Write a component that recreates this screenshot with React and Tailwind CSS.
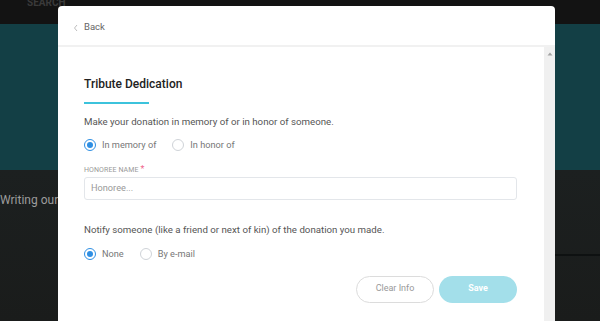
import React from "react";

function Radio({ checked, label, className = "" }) {
  return (
    <div className={"flex items-center " + className}>
      {checked ? (
        <span className="w-[12px] h-[12px] rounded-full border-[1.5px] border-[#2f8fe3] flex items-center justify-center">
          <span className="w-[6px] h-[6px] rounded-full bg-[#2f8fe3]" />
        </span>
      ) : (
        <span className="w-[12px] h-[12px] rounded-full border border-[#cfd3d8]" />
      )}
      <span className="ml-[6px] text-[9.2px] text-[#777] leading-none">{label}</span>
    </div>
  );
}

export default function App() {
  return (
    <div
      className="relative w-[600px] h-[321px] overflow-hidden flex flex-col"
      style={{ fontFamily: "Roboto, 'Liberation Sans', sans-serif" }}
    >
      <div className="h-[24px] bg-[#131313] shrink-0 overflow-hidden">
        <div className="pl-[27px] -mt-[4px] text-[10px] leading-[14px] font-bold text-[#3a3a3a]">SEARCH</div>
      </div>
      <div className="h-[146px] bg-[#133f45] shrink-0" />
      <div className="flex-1 bg-gradient-to-b from-[#1c2020] to-[#1a1c1b] flex flex-col">
        <div className="pt-[24px] text-[12px] text-[#9c9c9c] leading-none">Writing our</div>
        <div className="flex-1" />
      </div>
      <div className="absolute left-[555px] right-0 top-[254px] h-[2px] bg-[#0e1111]" />

      <div className="absolute left-[58px] top-[6px] w-[497px] h-[330px] bg-white rounded-t-[4px] flex flex-col">
        <div className="h-[41px] flex items-center pl-[15px] pt-[4px] border-b-2 border-[#f1f1f1] shrink-0">
          <svg width="6" height="8" viewBox="0 0 6 8" className="mt-[1px]">
            <path d="M4 1 L1.5 4 L4 7" fill="none" stroke="#b5b5b5" strokeWidth="0.9" />
          </svg>
          <span className="ml-[5px] text-[9.5px] text-[#666]">Back</span>
        </div>
        <div className="flex flex-1">
          <div className="flex-1 pl-[26px] pr-[27px] pt-[28px]">
            <div className="text-[12px] font-medium text-[#222] leading-[18px]">Tribute Dedication</div>
            <div className="mt-[9px] w-[65px] h-[1.5px] bg-[#3cc3dc]" />
            <div className="mt-[10px] text-[9.7px] text-[#555] leading-[15px]">
              Make your donation in memory of or in honor of someone.
            </div>
            <div className="mt-[10px] flex">
              <Radio checked label="In memory of" />
              <Radio label="In honor of" className="ml-[16px]" />
            </div>
            <div className="mt-[14px] text-[7px] text-[#999] leading-[10px] tracking-[0.1px]">
              HONOREE NAME <span className="text-[#f0668c] text-[9px] leading-none">*</span>
            </div>
            <div className="mt-[2px] h-[23px] border border-[#e3e6ea] rounded-[3px] flex items-center pl-[6px] text-[9.2px] text-[#999]">
              Honoree...
            </div>
            <div className="mt-[22px] text-[9.7px] text-[#555] leading-[15px]">
              Notify someone (like a friend or next of kin) of the donation you made.
            </div>
            <div className="mt-[11px] flex">
              <Radio checked label="None" />
              <Radio label="By e-mail" className="ml-[16px]" />
            </div>
            <div className="mt-[16px] flex justify-end">
              <div className="w-[78px] h-[27px] rounded-full border border-[#dcdcdc] flex items-center justify-center text-[9px] text-[#999]">
                Clear Info
              </div>
              <div className="ml-[5px] w-[78px] h-[27px] rounded-full bg-[#a3dfea] flex items-center justify-center text-[9px] font-bold text-white">
                Save
              </div>
            </div>
          </div>
          <div className="w-[11px] bg-[#f0f0f0] flex justify-center pt-[5px]">
            <svg width="6" height="4" viewBox="0 0 6 4">
              <path d="M3 0.5 L5.5 3.5 L0.5 3.5 Z" fill="#a3a3a3" />
            </svg>
          </div>
        </div>
      </div>
    </div>
  );
}
